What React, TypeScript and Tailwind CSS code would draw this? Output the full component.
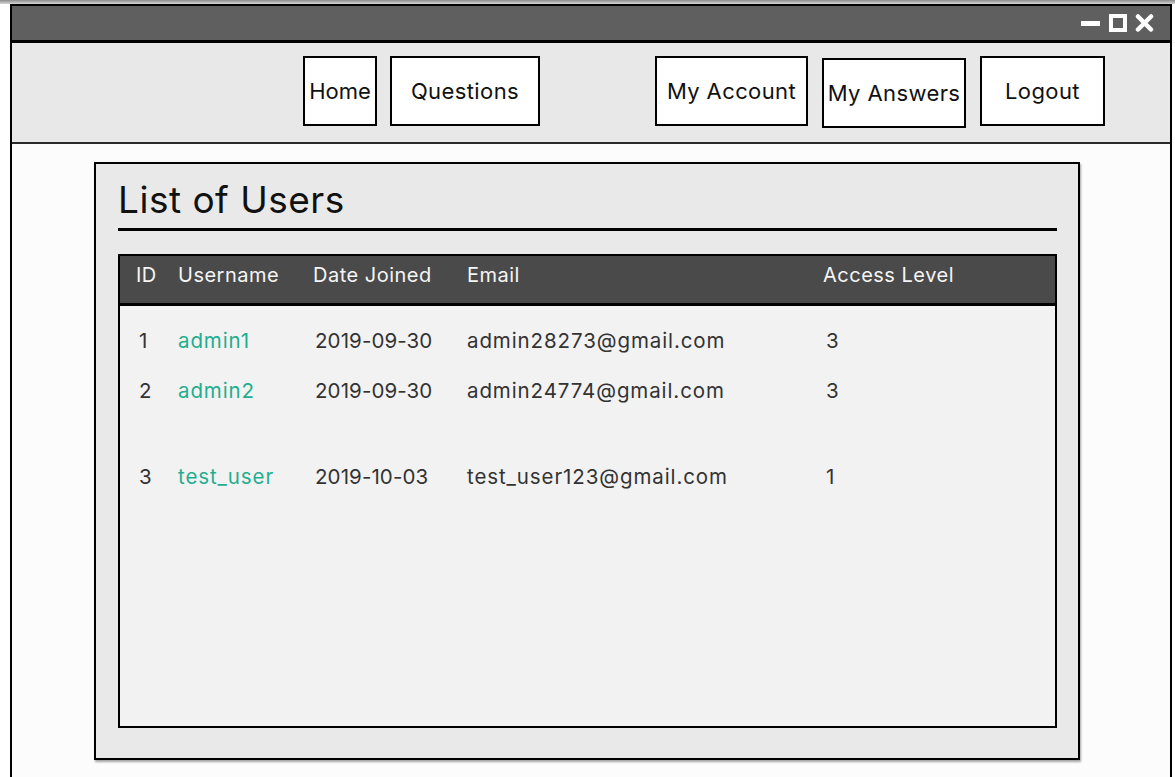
import React from "react";

const font = { fontFamily: "Inter, Lato, sans-serif" };

const rows = [
  { id: "1", user: "admin1", date: "2019-09-30", email: "admin28273@gmail.com", level: "3" },
  { id: "2", user: "admin2", date: "2019-09-30", email: "admin24774@gmail.com", level: "3" },
];

function Row({ r, extra }: { r: { id: string; user: string; date: string; email: string; level: string }; extra?: string }) {
  return (
    <div className={`grid grid-cols-[58px_135px_154px_356px_1fr] h-[50px] items-center text-[20.5px] tracking-[0.9px] text-[#333] ${extra ?? ""}`}>
      <div className="pl-[19px]">{r.id}</div>
      <div className="text-[#1fae8f]">{r.user}</div>
      <div className="pl-[2px] tracking-[0.1px]">{r.date}</div>
      <div>{r.email}</div>
      <div className="pl-[3px]">{r.level}</div>
    </div>
  );
}

function NavBtn({ label, w, extra }: { label: string; w: string; extra?: string }) {
  return (
    <div className={`${w} h-[70px] bg-white border-2 border-black flex items-center justify-center text-[22px] tracking-[0.4px] text-[#111] ${extra ?? ""}`}>
      {label}
    </div>
  );
}

export default function App() {
  return (
    <div className="w-[1175px] h-[777px] bg-white overflow-hidden" style={font}>
      <div className="h-[4px] bg-gradient-to-b from-[#8c8c8c] to-[#d8d8d8]" />
      <div className="ml-[10px] w-[1162px] h-[773px] border-l-2 border-r-2 border-t-2 border-black flex flex-col">
        {/* title bar */}
        <div className="h-[37px] bg-[#5f5f5f] border-b-[3px] border-black flex items-center justify-end pr-[16px] shrink-0">
          <div className="flex items-center">
            <div className="w-[19px] h-[5px] bg-white" />
            <div className="ml-[9px] w-[18px] h-[18px] border-[4px] border-white bg-[#5f5f5f]" />
            <svg className="ml-[8px]" width="19" height="18" viewBox="0 0 19 18">
              <path d="M3 2.5 L16 15.5 M16 2.5 L3 15.5" stroke="white" strokeWidth="4.5" strokeLinecap="round" />
            </svg>
          </div>
        </div>
        {/* nav */}
        <div className="h-[101px] bg-[#e8e8e8] border-b-2 border-[#2a2a2a] shrink-0 flex items-start pt-[13px]">
          <NavBtn label="Home" w="w-[74px]" extra="ml-[291px] tracking-normal" />
          <NavBtn label="Questions" w="w-[150px]" extra="ml-[13px]" />
          <NavBtn label="My Account" w="w-[153px]" extra="ml-[115px]" />
          <NavBtn label="My Answers" w="w-[144px]" extra="ml-[14px] mt-[2px]" />
          <NavBtn label="Logout" w="w-[125px]" extra="ml-[14px]" />
        </div>
        {/* content */}
        <div className="flex-1 bg-[#fcfcfc] pt-[18px] pl-[82px]">
          <div className="w-[986px] h-[598px] bg-[#e9e9e9] border-2 border-black shadow-[1px_2px_2px_rgba(0,0,0,0.35)] flex flex-col pl-[22px] pr-[21px]">
            <div className="pt-[14px] h-[64px] text-[37px] leading-[44px] tracking-[0.5px] text-[#111]">List of Users</div>
            <div className="h-[3px] bg-black" />
            <div className="mt-[23px] h-[474px] border-2 border-black bg-[#f2f2f2] flex flex-col">
              <div className="h-[50px] pb-[10px] bg-[#4a4a4a] border-b-[3px] border-black grid grid-cols-[58px_135px_154px_356px_1fr] items-center text-[20px] tracking-[0.5px] text-[#f5f5f5] shrink-0">
                <div className="pl-[16px]">ID</div>
                <div>Username</div>
                <div>Date Joined</div>
                <div>Email</div>
                <div>Access Level</div>
              </div>
              <div className="pt-[10px]">
                {rows.map((r) => (
                  <Row key={r.id} r={r} />
                ))}
                <Row r={{ id: "3", user: "test_user", date: "2019-10-03", email: "test_user123@gmail.com", level: "1" }} extra="mt-[36px]" />
              </div>
            </div>
          </div>
        </div>
      </div>
    </div>
  );
}
